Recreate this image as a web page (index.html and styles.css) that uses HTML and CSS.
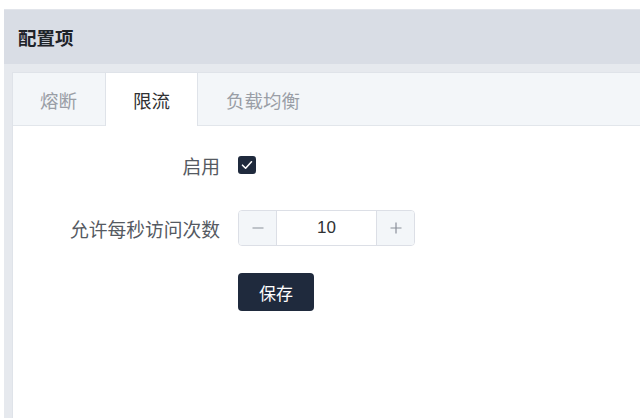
FILE: index.html
```html
<!DOCTYPE html>
<html lang="zh">
<head>
<meta charset="utf-8">
<link rel="stylesheet" href="styles.css">
</head>
<body>
<div class="panel">
  <div class="panel-header">配置项</div>
  <div class="panel-body">
    <div class="card">
      <div class="tabs">
        <div class="tab">熔断</div>
        <div class="tab active">限流</div>
        <div class="tab">负载均衡</div>
      </div>
      <div class="form">
        <div class="row">
          <div class="label">启用</div>
          <div class="control">
            <span class="checkbox">
              <svg width="12" height="10" viewBox="0 0 12 10"><path d="M1.5 5.2 L4.6 8.2 L10.5 1.8" fill="none" stroke="#fff" stroke-width="1.6" stroke-linecap="round" stroke-linejoin="round"/></svg>
            </span>
          </div>
        </div>
        <div class="row">
          <div class="label">允许每秒访问次数</div>
          <div class="control">
            <div class="number">
              <span class="step minus">
                <svg width="12" height="12" viewBox="0 0 12 12"><path d="M0.5 6 H11.5" stroke="#8a8f99" stroke-width="1.2"/></svg>
              </span>
              <span class="value">10</span>
              <span class="step plus">
                <svg width="12" height="12" viewBox="0 0 12 12"><path d="M0.5 6 H11.5 M6 0.5 V11.5" stroke="#8a8f99" stroke-width="1.2"/></svg>
              </span>
            </div>
          </div>
        </div>
        <div class="row">
          <div class="label"></div>
          <div class="control">
            <button class="btn">保存</button>
          </div>
        </div>
      </div>
    </div>
  </div>
</div>
</body>
</html>
```
FILE: styles.css
```css
html, body {
  margin: 0;
  padding: 0;
  background: #ffffff;
  overflow: hidden;
  height: 418px;
}
body {
  font-family: "Noto Sans CJK SC", "Noto Sans", sans-serif;
}
.panel {
  margin: 9px 0 0 4px;
  height: 409px;
  background: #e6e9ee;
  border-top: 1px solid #e2e5eb;
  display: flex;
  flex-direction: column;
  box-sizing: border-box;
}
.panel-header {
  height: 54px;
  background: #d9dde5;
  display: flex;
  align-items: center;
  padding-left: 14px;
  font-size: 18.5px;
  font-weight: 700;
  color: #1f2329;
  flex-shrink: 0;
}
.panel-body {
  flex: 1;
  padding: 8px 0 0 8px;
  display: flex;
}
.card {
  flex: 1;
  background: #ffffff;
  border-left: 1px solid #dfe3e9;
  border-top: 1px solid #dfe3e9;
  display: flex;
  flex-direction: column;
}
.tabs {
  display: flex;
  height: 52px;
  background: #f3f6f9;
  border-bottom: 1px solid #e2e6eb;
  flex-shrink: 0;
}
.tab {
  padding: 0 27px;
  display: flex;
  align-items: center;
  font-size: 18.5px;
  color: #9a9ea6;
  border-right: 1px solid transparent;
  border-left: 1px solid transparent;
  margin-bottom: -1px;
}
.tab:first-child {
  border-left: none;
  padding-left: 27px;
}
.tab.active {
  background: #ffffff;
  color: #303133;
  border-left-color: #dfe3e9;
  border-right-color: #dfe3e9;
}
.form {
  padding-top: 21px;
  display: flex;
  flex-direction: column;
  gap: 27px;
}
.row {
  display: flex;
  align-items: center;
  min-height: 36px;
}
.label {
  width: 207px;
  text-align: right;
  font-size: 18.75px;
  color: #555a62;
  padding-right: 18px;
  flex-shrink: 0;
}
.control {
  display: flex;
  align-items: center;
}
.checkbox {
  width: 18px;
  height: 18px;
  border-radius: 3px;
  background: #1f2a3d;
  display: flex;
  align-items: center;
  justify-content: center;
}
.number {
  display: flex;
  height: 36px;
  width: 177px;
  border: 1px solid #dcdfe6;
  border-radius: 4px;
  box-sizing: border-box;
  overflow: hidden;
}
.step {
  width: 37px;
  background: #f3f6f9;
  display: flex;
  align-items: center;
  justify-content: center;
  flex-shrink: 0;
}
.minus {
  border-right: 1px solid #dcdfe6;
}
.plus {
  border-left: 1px solid #dcdfe6;
}
.value {
  flex: 1;
  display: flex;
  align-items: center;
  justify-content: center;
  font-size: 17px;
  color: #303133;
  font-family: "Liberation Sans", "Noto Sans", sans-serif;
}
.btn {
  width: 76px;
  height: 38px;
  background: #1f2a3d;
  color: #ffffff;
  border: none;
  border-radius: 4px;
  font-size: 17px;
  font-family: "Noto Sans CJK SC", "Noto Sans", sans-serif;
  padding: 0;
}
```
